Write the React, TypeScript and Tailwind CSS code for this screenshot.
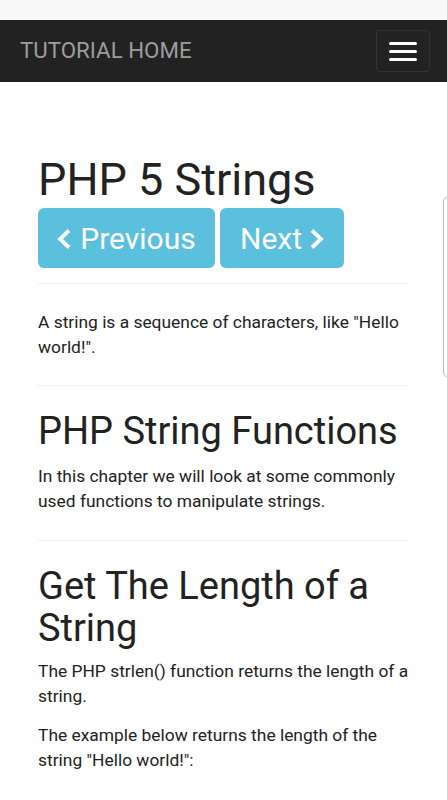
function NavBar() {
  return (
    <nav className="flex h-[62px] items-center justify-between bg-[#222222] pl-5 pr-[17px]">
      <span className="text-[22.3px] uppercase text-[#9d9d9d]">Tutorial Home</span>
      <button
        type="button"
        className="flex h-[42px] w-[54px] flex-col items-center justify-center gap-[5px] rounded border border-[#333333]"
      >
        <span className="block h-[3px] w-[28px] rounded-sm bg-white" />
        <span className="block h-[3px] w-[28px] rounded-sm bg-white" />
        <span className="block h-[3px] w-[28px] rounded-sm bg-white" />
      </button>
    </nav>
  )
}

function Chevron({ dir }: { dir: 'left' | 'right' }) {
  return (
    <svg width="14" height="20" viewBox="0 0 14 20" fill="none" className="mt-[2px] shrink-0">
      <polyline
        points={dir === 'left' ? '12,1.5 3,10 12,18.5' : '2,1.5 11,10 2,18.5'}
        stroke="white"
        strokeWidth={3.8}
      />
    </svg>
  )
}

export default function App() {
  return (
    <div className="relative min-h-[800px] overflow-hidden bg-white font-['Roboto',sans-serif] text-[#222222]">
      <div className="h-5 bg-[#f8f8f8]" />
      <NavBar />

      <main className="px-[38px] pt-[71px]">
        <h1 className="text-[45px] leading-[54px] text-[#222222]">PHP 5 Strings</h1>
        <div className="mt-[1px] flex gap-[5px]">
          <button
            type="button"
            className="flex h-[60px] w-[177px] items-center justify-center gap-[9px] rounded-md bg-[#5bc0de] text-[30px] text-white"
          >
            <Chevron dir="left" />
            Previous
          </button>
          <button
            type="button"
            className="flex h-[60px] w-[124px] items-center justify-center gap-[8px] rounded-md bg-[#5bc0de] text-[30px] text-white"
          >
            Next
            <Chevron dir="right" />
          </button>
        </div>

        <hr className="mt-[15px] border-[#eeeeee]" />
        <p className="mt-[26px] text-[17.4px] leading-[25px]">
          A string is a sequence of characters, like "Hello world!".
        </p>

        <hr className="mt-[25px] border-[#eeeeee]" />
        <h2 className="mt-[24px] text-[38px] leading-[42px]">PHP String Functions</h2>
        <p className="mt-[12px] text-[17.4px] leading-[25px]">
          In this chapter we will look at some commonly used functions to manipulate strings.
        </p>

        <hr className="mt-[26px] border-[#eeeeee]" />
        <h2 className="mt-[24px] text-[38px] leading-[42px]">Get The Length of a String</h2>
        <p className="mt-[10px] text-[17.4px] leading-[25px]">
          The PHP strlen() function returns the length of a string.
        </p>
        <p className="mt-[14px] text-[17.4px] leading-[25px]">
          The example below returns the length of the string "Hello world!":
        </p>
      </main>

      <div className="absolute right-[-10px] top-[196px] h-[182px] w-[14px] rounded-l-md border border-[#bbbbbb] bg-white" />
    </div>
  )
}
